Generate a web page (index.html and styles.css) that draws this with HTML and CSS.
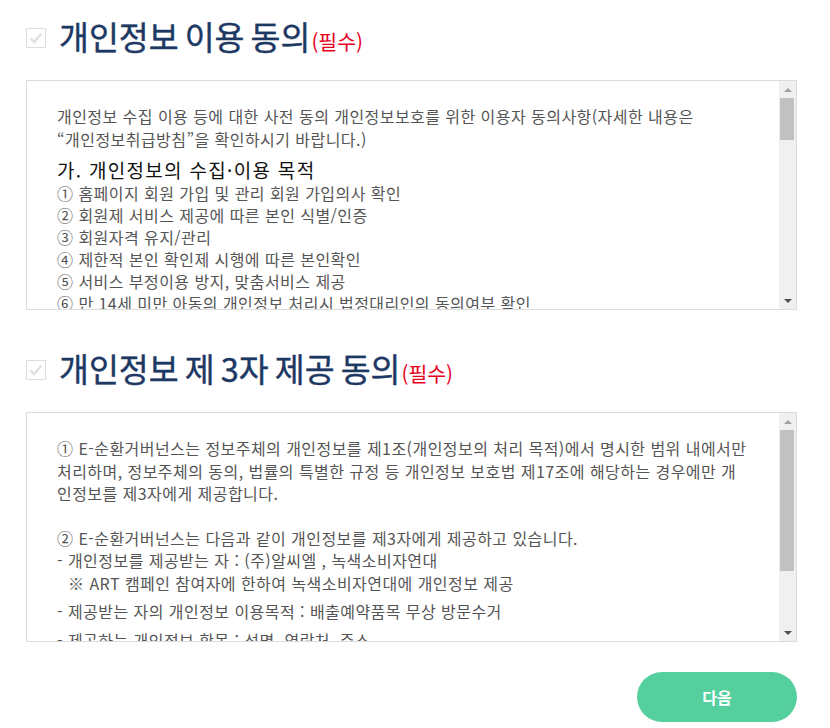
FILE: index.html
```html
<!DOCTYPE html>
<html lang="ko">
<head>
    <meta charset="UTF-8">
    <meta name="viewport" content="width=device-width, initial-scale=1.0">
    <title>개인정보 동의</title>
    <link rel="stylesheet" href="styles.css">
</head>
<body>
    <div class="wrap">
        <!-- 개인정보 이용 동의 -->
        <section class="agree">
            <div class="agree-head">
                <span class="chk">
                    <svg width="14" height="12" viewBox="0 0 14 12"><path d="M1.5 6.5 L5 10 L12.5 1.5" fill="none" stroke="#e2e2e2" stroke-width="2.6"/></svg>
                </span>
                <h2 class="agree-title">개인정보 이용 동의<em class="req">(필수)</em></h2>
            </div>
            <div class="terms">
                <div class="terms-body">
                    <p class="intro">개인정보 수집 이용 등에 대한 사전 동의 개인정보보호를 위한 이용자 동의사항(자세한 내용은<br>“개인정보취급방침”을 확인하시기 바랍니다.)</p>
                    <h3 class="terms-sub">가. 개인정보의 수집·이용 목적</h3>
                    <p>① 홈페이지 회원 가입 및 관리 회원 가입의사 확인</p>
                    <p>② 회원제 서비스 제공에 따른 본인 식별/인증</p>
                    <p>③ 회원자격 유지/관리</p>
                    <p>④ 제한적 본인 확인제 시행에 따른 본인확인</p>
                    <p>⑤ 서비스 부정이용 방지, 맞춤서비스 제공</p>
                    <p>⑥ 만 14세 미만 아동의 개인정보 처리시 법정대리인의 동의여부 확인</p>
                    <p>⑦ 각종 고지·통지, 고충처리 등의 목적으로 개인정보를 처리합니다.</p>
                    <h3 class="terms-sub">나. 수집하는 개인정보의 항목</h3>
                    <p>① 필수항목 : 성명, 아이디, 비밀번호, 휴대전화번호, 이메일, 주소</p>
                    <p>② 선택항목 : 전화번호</p>
                </div>
                <div class="scrollbar">
                    <span class="sb-btn"><i class="arrow-up"></i></span>
                    <span class="sb-track"><span class="sb-thumb thumb-short"></span></span>
                    <span class="sb-btn"><i class="arrow-down"></i></span>
                </div>
            </div>
        </section>

        <!-- 개인정보 제 3자 제공 동의 -->
        <section class="agree">
            <div class="agree-head">
                <span class="chk">
                    <svg width="14" height="12" viewBox="0 0 14 12"><path d="M1.5 6.5 L5 10 L12.5 1.5" fill="none" stroke="#e2e2e2" stroke-width="2.6"/></svg>
                </span>
                <h2 class="agree-title">개인정보 제 3자 제공 동의<em class="req">(필수)</em></h2>
            </div>
            <div class="terms">
                <div class="terms-body terms-third">
                    <p>① E-순환거버넌스는 정보주체의 개인정보를 제1조(개인정보의 처리 목적)에서 명시한 범위 내에서만 처리하며, 정보주체의 동의, 법률의 특별한 규정 등 개인정보 보호법 제17조에 해당하는 경우에만 개인정보를 제3자에게 제공합니다.</p>
                    <p class="gap">② E-순환거버넌스는 다음과 같이 개인정보를 제3자에게 제공하고 있습니다.</p>
                    <ul class="dash-list">
                        <li>- 개인정보를 제공받는 자 : (주)알씨엘 , 녹색소비자연대
                            <span class="note">※ ART 캠페인 참여자에 한하여 녹색소비자연대에 개인정보 제공</span>
                        </li>
                        <li>- 제공받는 자의 개인정보 이용목적 : 배출예약품목 무상 방문수거</li>
                        <li>- 제공하는 개인정보 항목 : 성명, 연락처, 주소</li>
                        <li>- 제공받는 자의 개인정보 보유 및 이용기간 : 수거 완료 후 즉시 파기</li>
                    </ul>
                </div>
                <div class="scrollbar">
                    <span class="sb-btn"><i class="arrow-up"></i></span>
                    <span class="sb-track"><span class="sb-thumb thumb-long"></span></span>
                    <span class="sb-btn"><i class="arrow-down"></i></span>
                </div>
            </div>
        </section>

        <div class="actions">
            <button class="btn-next">다음</button>
        </div>
    </div>
</body>
</html>
```

FILE: styles.css
```css
body {
    margin: 0;
    background: #fff;
    font-family: "Noto Sans CJK KR", "Noto Sans", sans-serif;
    color: #555;
}

.wrap {
    width: 771px;
    padding: 18px 0 6px 26px;
}

.agree + .agree {
    margin-top: 40px;
}

.agree-head {
    display: flex;
    align-items: center;
    height: 40px;
    margin-bottom: 22px;
}

.chk {
    width: 18px;
    height: 18px;
    border: 1px solid #dedede;
    display: flex;
    align-items: center;
    justify-content: center;
    margin-right: 13px;
    flex-shrink: 0;
}

.agree-title {
    margin: 0;
    font-size: 32.5px;
    font-weight: 400;
    word-spacing: -3px;
    -webkit-text-stroke: 0.4px #1d3863;
    color: #1d3863;
    line-height: 40px;
    white-space: nowrap;
}

.req {
    font-style: normal;
    font-size: 20.5px;
    word-spacing: 0;
    -webkit-text-stroke: 0;
    margin-left: 1px;
    color: #e8001c;
}

/* 약관 박스 */
.terms {
    display: flex;
    height: 230px;
    box-sizing: border-box;
    border: 1px solid #dcdcdc;
}

.terms-body {
    flex: 1;
    overflow: hidden;
    padding: 24px 30px 0 30px;
    font-size: 16px;
    letter-spacing: 0.45px;
    line-height: 22px;
}

.terms-body p {
    margin: 0;
}

.terms-body .intro {
    line-height: 23px;
    margin-bottom: 7px;
}

.terms-sub {
    margin: 0;
    font-size: 19px;
    font-weight: 400;
    letter-spacing: 1.3px;
    line-height: 24px;
    color: #111;
}

.terms-third {
    line-height: 22.5px;
}

.terms-third .gap {
    margin-top: 22px;
}

.dash-list {
    list-style: none;
    margin: 0;
    padding: 0;
}

.dash-list li {
    margin-bottom: 6px;
}

.note {
    display: block;
    padding-left: 11px;
}

/* 스크롤바 */
.scrollbar {
    width: 17px;
    display: flex;
    flex-direction: column;
    background: #f0f0f0;
}

.sb-btn {
    height: 17px;
    display: flex;
    align-items: center;
    justify-content: center;
}

.sb-track {
    flex: 1;
    padding: 0 2px 0 1px;
}

.sb-thumb {
    display: block;
    background: #c1c1c1;
}

.thumb-short {
    height: 42px;
}

.thumb-long {
    height: 141px;
}

.arrow-up,
.arrow-down {
    width: 0;
    height: 0;
    border-left: 4px solid transparent;
    border-right: 4px solid transparent;
}

.arrow-up {
    border-bottom: 4px solid #a3a3a3;
}

.arrow-down {
    border-top: 4px solid #505050;
}

.actions {
    display: flex;
    justify-content: flex-end;
    margin-top: 30px;
}

.btn-next {
    width: 160px;
    height: 50px;
    border: none;
    border-radius: 25px;
    background: #56cf9f;
    color: #fff;
    font-family: "Noto Sans CJK KR", sans-serif;
    font-size: 16px;
    font-weight: bold;
    cursor: pointer;
}
```
